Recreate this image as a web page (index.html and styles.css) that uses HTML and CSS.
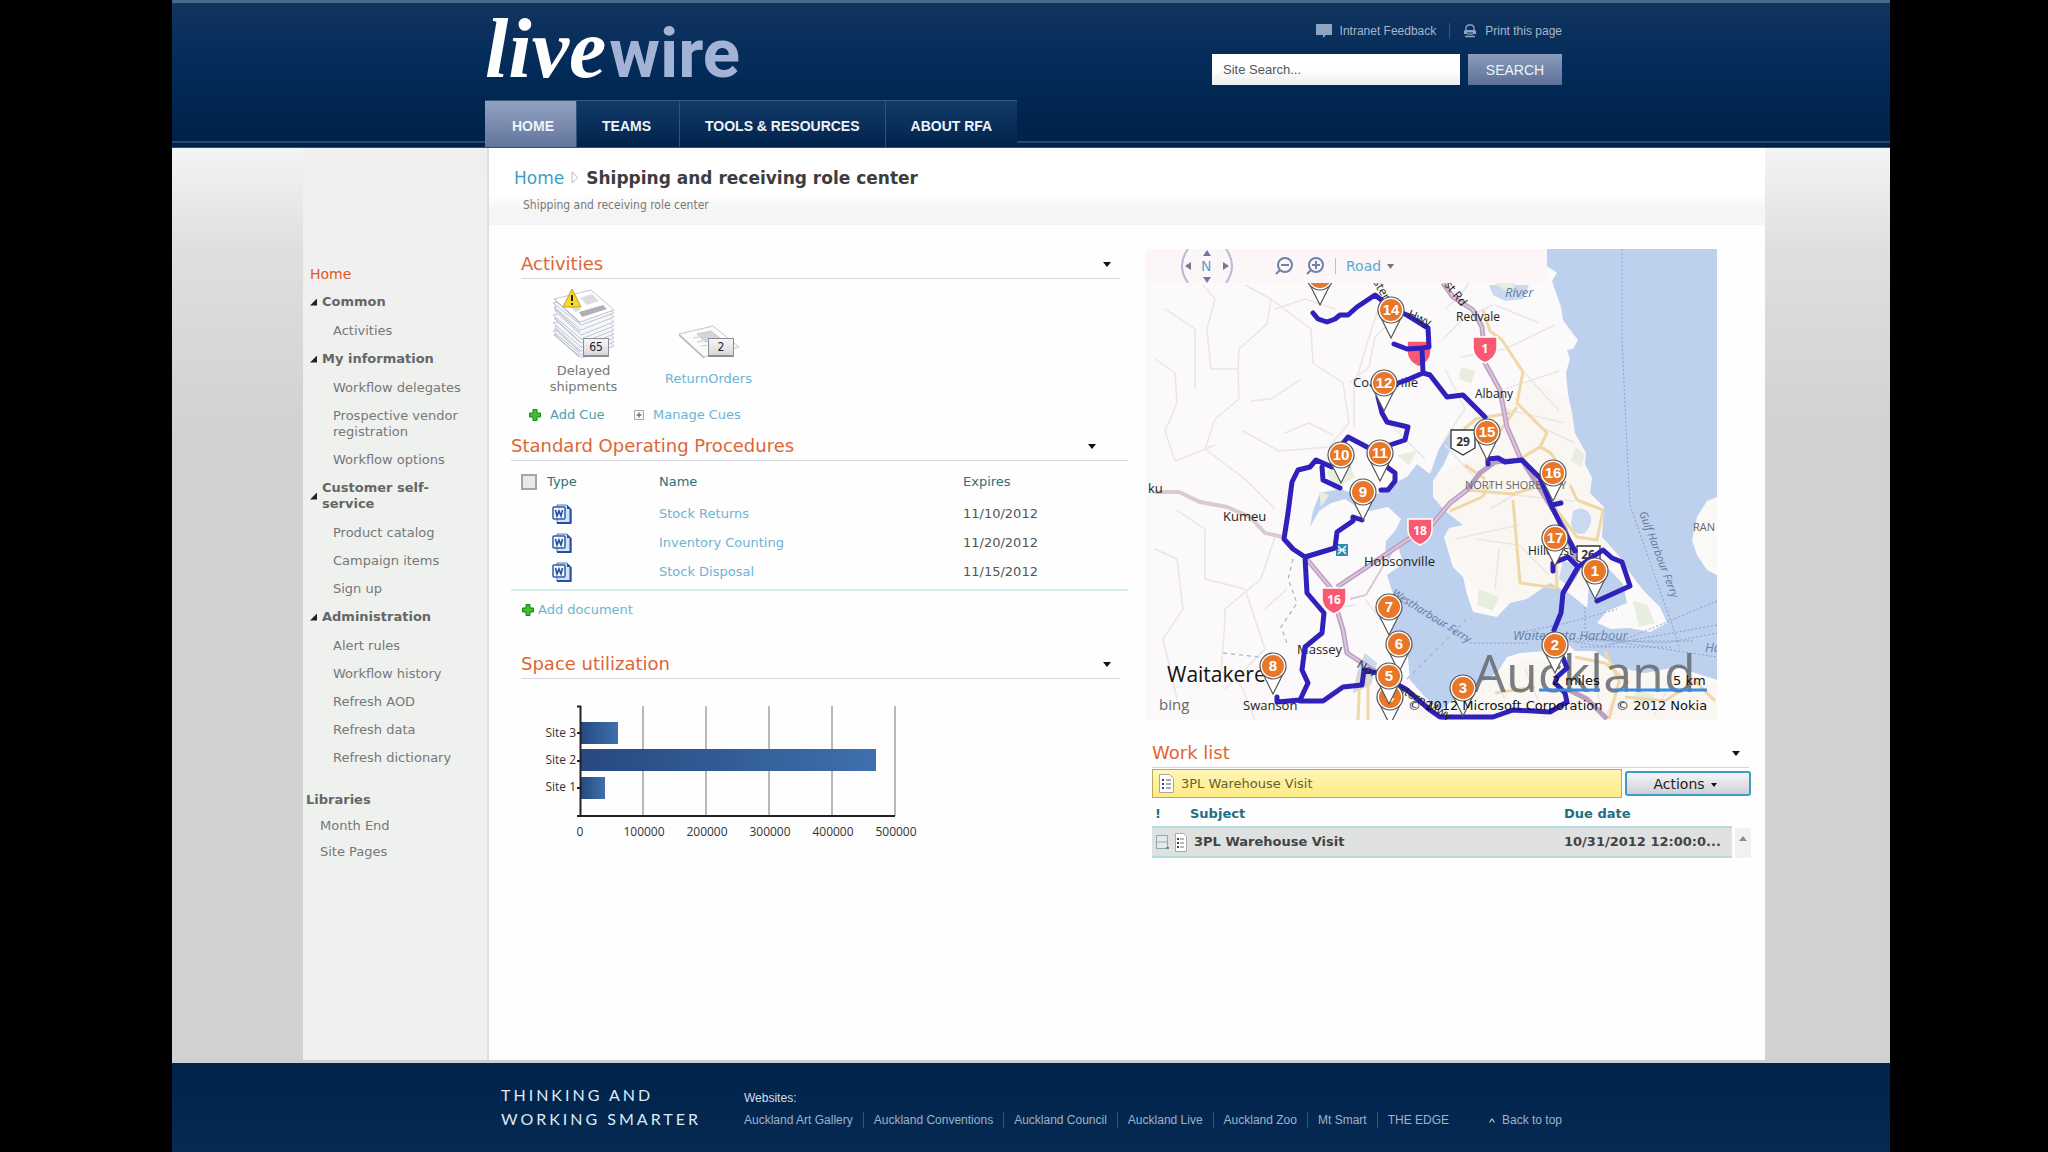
FILE: index.html
```html
<!DOCTYPE html>
<html lang="en">
<head>
<meta charset="utf-8">
<title>Shipping and receiving role center</title>
<link rel="stylesheet" href="styles.css">
</head>
<body>
<div class="page" id="top">
  <header class="header">
    <div class="header-row">
      <a class="logo" href="#"><span class="logo-live">live</span><span class="logo-wire">wire</span></a>
      <div class="tools">
        <div class="tool-links">
          <a class="tool-link" href="#"><svg width="16" height="14" viewBox="0 0 16 14"><path d="M0 0h16v11H10l-3 3v-3H0z" fill="#8fa4c0"/></svg>Intranet Feedback</a>
          <a class="tool-link" href="#"><svg width="14" height="14" viewBox="0 0 14 14"><path d="M3 6V3l2-2h4l2 2v3" fill="none" stroke="#8fa4c0" stroke-width="1.300"/><path d="M2 6h10l1 1v3H1V7z" fill="#8fa4c0"/><path d="M2 12.500h10M4 10h6" stroke="#8fa4c0" stroke-width="1.500"/><path d="M4 9h6" stroke="#0a2f5d"/></svg>Print this page</a>
        </div>
        <form class="search">
          <input class="search-box" type="text" aria-label="Site search" placeholder="Site Search...">
          <button class="search-button" type="button">SEARCH</button>
        </form>
      </div>
    </div>
    <nav class="tabs">
      <a class="tab tab-active" href="#">HOME</a>
      <a class="tab" href="#">TEAMS</a>
      <a class="tab" href="#">TOOLS &amp; RESOURCES</a>
      <a class="tab" href="#">ABOUT RFA</a>
    </nav>
  </header>

  <div class="body">
    <aside class="sidebar">
      <a class="side-home" href="#">Home</a>
      <h3 class="side-head"><span class="tri"></span>Common</h3>
      <a class="side-link" href="#">Activities</a>
      <h3 class="side-head"><span class="tri"></span>My information</h3>
      <a class="side-link" href="#">Workflow delegates</a>
      <a class="side-link" href="#">Prospective vendor registration</a>
      <a class="side-link" href="#">Workflow options</a>
      <h3 class="side-head"><span class="tri"></span><span class="side-name">Customer self-service</span></h3>
      <a class="side-link" href="#">Product catalog</a>
      <a class="side-link" href="#">Campaign items</a>
      <a class="side-link" href="#">Sign up</a>
      <h3 class="side-head"><span class="tri"></span>Administration</h3>
      <a class="side-link" href="#">Alert rules</a>
      <a class="side-link" href="#">Workflow history</a>
      <a class="side-link" href="#">Refresh AOD</a>
      <a class="side-link" href="#">Refresh data</a>
      <a class="side-link" href="#">Refresh dictionary</a>
      <h3 class="lib-head">Libraries</h3>
      <a class="lib-link" href="#">Month End</a>
      <a class="lib-link" href="#">Site Pages</a>
    </aside>

    <main class="main">
      <div class="title-band">
        <div class="crumbs"><a class="crumb-link" href="#">Home</a><svg width="8" height="14" viewBox="0 0 8 14"><path d="M1 1v11l6-5.500z" fill="#fff" stroke="#b9b9b9"/></svg><h1 class="title">Shipping and receiving role center</h1></div>
        <p class="subtitle">Shipping and receiving role center</p>
      </div>
      <div class="columns">
        <div class="col-left">
          <section class="inset">
            <div class="head"><h2>Activities</h2><button class="menu" type="button" aria-label="Activities menu"></button></div>
            <div class="cues">
              <a class="cue cue-late" href="#">
                <svg class="cue-icon" width="64" height="70" viewBox="0 0 64 70">
                  <g fill="#f6f7fa" stroke="#c3c6d0" stroke-width="1">
                    <path d="M2 47l38-9 22 20-32 12z"/><path d="M1 43l38-9 23 20-33 13z"/><path d="M3 39l38-9 21 20-33 13z"/><path d="M1 35l38-9 23 20-33 13z"/><path d="M3 31l38-9 21 20-33 13z"/><path d="M1 27l38-9 23 20-33 13z"/><path d="M3 23l38-9 21 20-33 13z"/><path d="M2 19l38-9 22 19-33 13z"/><path d="M1 15l38-9 23 19-33 12z"/>
                    <path d="M2 11l37-9 23 20-34 12z" fill="#fff"/>
                  </g>
                  <path d="M2 11l26 24M2 20l26 24M2 30l26 24M2 40l26 24M2 46l25 23" stroke="#a9b2d0" fill="none"/>
                  <path d="M28 10l12-4 7 7-12 4zM18 18l6-2 5 6-6 2z" fill="#dcdde1"/>
                  <path d="M27 24l24-7 4 4-25 8z" fill="#aeb0b5"/>
                  <path d="M20 1l9 18H11z" fill="#f7d92b" stroke="#c59f12"/><path d="M20 7v6M20 15v2" stroke="#222" stroke-width="2"/>
                </svg>
                <span class="badge">65</span>
                <span class="cue-text">Delayed shipments</span>
              </a>
              <a class="cue" href="#">
                <svg class="cue-icon" width="64" height="70" viewBox="0 0 64 70">
                  <path d="M2 46l34-8 26 21-35 10z" fill="#fbfbfb" stroke="#c6c7cb"/><path d="M2 46v2l24 22h2z" fill="#b8bac0"/>
                  <path d="M20 46l14-3 9 7-15 4zM16 50l6-1M20 54l6-1M24 58l6-1" fill="#d5d6da" stroke="#c9cace"/>
                </svg>
                <span class="badge">2</span>
                <span class="cue-text">ReturnOrders</span>
              </a>
            </div>
            <div class="cue-links">
              <a class="add-cue" href="#"><svg width="12" height="12" viewBox="0 0 12 12"><path d="M4 .5h4V4h3.500v4H8v3.500H4V8H.5V4H4z" fill="#3fc02f" stroke="#17851a"/></svg>Add Cue</a>
              <a class="manage-cues" href="#"><svg width="10" height="10" viewBox="0 0 10 10"><path d="M.5.5h9v9h-9z" fill="#fafafa" stroke="#aaa"/><path d="M2.500 5h5M5 2.500v5" stroke="#777" stroke-width="1.500"/></svg>Manage Cues</a>
            </div>
          </section>

          <section class="procedures">
            <div class="head head-wide"><h2>Standard Operating Procedures</h2><button class="menu" type="button" aria-label="Procedures menu"></button></div>
            <table class="docs">
              <thead><tr><th class="c-check"><input type="checkbox" aria-label="Select all"></th><th class="c-type">Type</th><th class="c-name">Name</th><th>Expires</th></tr></thead>
              <tbody>
                <tr><td></td><td class="c-icon"><svg class="word" width="20" height="20" viewBox="0 0 20 20"><path d="M5 1h10l4 4v14H5z" fill="#d5e3f8" stroke="#5b7fbf"/><path d="M15 1v4h4z" fill="#27509c"/><path d="M18.500 5v14H5" fill="none" stroke="#27509c" stroke-width="2"/><rect x="1" y="3" width="12" height="12" rx="1" fill="#f2f6fd" stroke="#2d5cab" stroke-width="1.500"/><path d="M3.500 6l1.500 6 2-5 2 5 1.500-6" fill="none" stroke="#27509c" stroke-width="1.600"/></svg></td><td><a href="#">Stock Returns</a></td><td>11/10/2012</td></tr>
                <tr><td></td><td class="c-icon"><svg class="word" width="20" height="20" viewBox="0 0 20 20"><path d="M5 1h10l4 4v14H5z" fill="#d5e3f8" stroke="#5b7fbf"/><path d="M15 1v4h4z" fill="#27509c"/><path d="M18.500 5v14H5" fill="none" stroke="#27509c" stroke-width="2"/><rect x="1" y="3" width="12" height="12" rx="1" fill="#f2f6fd" stroke="#2d5cab" stroke-width="1.500"/><path d="M3.500 6l1.500 6 2-5 2 5 1.500-6" fill="none" stroke="#27509c" stroke-width="1.600"/></svg></td><td><a href="#">Inventory Counting</a></td><td>11/20/2012</td></tr>
                <tr><td></td><td class="c-icon"><svg class="word" width="20" height="20" viewBox="0 0 20 20"><path d="M5 1h10l4 4v14H5z" fill="#d5e3f8" stroke="#5b7fbf"/><path d="M15 1v4h4z" fill="#27509c"/><path d="M18.500 5v14H5" fill="none" stroke="#27509c" stroke-width="2"/><rect x="1" y="3" width="12" height="12" rx="1" fill="#f2f6fd" stroke="#2d5cab" stroke-width="1.500"/><path d="M3.500 6l1.500 6 2-5 2 5 1.500-6" fill="none" stroke="#27509c" stroke-width="1.600"/></svg></td><td><a href="#">Stock Disposal</a></td><td>11/15/2012</td></tr>
              </tbody>
            </table>
            <a class="add-doc" href="#"><svg width="12" height="12" viewBox="0 0 12 12"><path d="M4 .5h4V4h3.500v4H8v3.500H4V8H.5V4H4z" fill="#3fc02f" stroke="#17851a"/></svg>Add document</a>
          </section>

          <section class="inset space">
            <div class="head"><h2>Space utilization</h2><button class="menu" type="button" aria-label="Space utilization menu"></button></div>
            <svg class="chart" width="410" height="140" viewBox="1 0 410 140">
              <defs><linearGradient id="bar"><stop offset="0" stop-color="#26497f"/><stop offset="1" stop-color="#3f70ae"/></linearGradient></defs>
              <path d="M123 6v110M186 6v110M249 6v110M312 6v110M375 6v110" stroke="#a3a3a8" stroke-width="1.500"/>
              <rect x="61" y="22" width="37" height="22" fill="url(#bar)"/>
              <rect x="61" y="49" width="295" height="22" fill="url(#bar)"/>
              <rect x="61" y="77" width="24" height="22" fill="url(#bar)"/>
              <path d="M57 6.500h3.500V116M57 116h318M57 33h4M57 61h4M57 88h4" fill="none" stroke="#222" stroke-width="2"/>
              <g class="chart-y"><text x="56" y="37">Site 3</text><text x="56" y="64">Site 2</text><text x="56" y="91">Site 1</text></g>
              <g class="chart-x"><text x="60" y="136">0</text><text x="124" y="136">100000</text><text x="187" y="136">200000</text><text x="250" y="136">300000</text><text x="313" y="136">400000</text><text x="376" y="136">500000</text></g>
            </svg>
          </section>
        </div>

        <div class="col-right">
          <div class="map">
            <svg class="map-art" viewBox="0 0 572 471">
              <defs>
                <g id="pin"><path d="M-10 8L0 28 10 8" fill="#fff" stroke="#555" stroke-width="1.200"/><circle r="13" fill="#fff" stroke="#555" stroke-width="1.200"/><circle r="11" fill="#e9772a"/></g>
                <path id="shield" d="M-12-12H12V0Q11 9 0 14Q-11 9-12 0z" fill="#fa5a71" stroke="#fff" stroke-width="1.500"/>
                <clipPath id="frame"><path d="M0 34H572V471H0z"/></clipPath>
              </defs>
              <rect width="572" height="471" fill="#fbf9f9"/>
              <path d="M284 230l40-20 60-80 40 20 20 60 14 50 0 30 20 20-40 30-60 20-40-10-30-40zM262 470l60-30 60-30 80 5 110 20v36z" fill="#faf7f3"/>
              <path d="M402 0V17L412 24 407 32 410 41 416 58 418 71 426 82 433 91 428 100 422 101 425 110 421 124 423 145 427 164 430 184 441 204 440 215 447 229 445 244 459 258 457 288 475 308 485 324 498 341 515 358 522 374 505 383 485 379 466 380 452 374 462 362 482 354 478 335 462 318 445 325 442 359 425 345 405 334 382 350 365 354 352 368 328 363 322 345 318 328 308 318 302 298 299 288 304 279 318 276 300 262 288 248 288 232 299 215 310 190 304 184 294 200 285 225 272 215 262 228 245 236 225 250 195 240 175 244 168 262 165 278 174 262 186 254 200 250 215 260 225 262 243 258 256 270 250 282 241 292 240 306 244 311 252 294 260 320 280 330 292 318 290 308 262 312 242 326 248 345 240 378 262 398 265 431 280 448 295 461 318 444 352 424 362 408 375 404 400 402 418 390 430 402 450 402 472 418 500 424 532 418 572 431V0z" fill="#bdd1ef"/>
              <path d="M572 248L562 252 552 268 547 291 552 306 562 321 572 326zM482 372q10 -4 14 4l-8 4z" fill="#fbf9f6"/>
              <path d="M428 262q10-6 16 2t-4 20q-12 4-14-10zM418 312l10 2 4 14-10 8-8-6zM344 36h40l-6 14-18 2-12-6zM220 404l12 10-6 22-18 8 4-20z" fill="#c8d9f0"/>
              <g fill="#e8eedd"><path d="M316 118l14 4-4 12-12-4zM252 206l20-4-8 14zM488 352l14 4 8 18-16 4zM182 222l20-14 8 20-22 14zM334 340l20 8-6 14-16-6zM174 242l10 4-8 12zM430 198l10 8-4 12-10-6zM490 440l20 6-6 12-16-4zM350 34h20l-4 12z"/></g>
              <g fill="none" stroke="#e9e5e8" stroke-width="1.500" stroke-linejoin="round">
                <path d="M58 36L70 50 62 80 66 120 93 120 94 100 122 75 126 50 100 36M93 120L94 150 70 170 60 200 100 230 130 260M10 110l20 14 2 30-12 28 10 30 40-16M126 50l40 30 2 34 30 20 6 40-20 24-50 4-36-20M204 134l20-16 6-30 20-20M156 130l-30 20-20 2M30 260l30 20 0 50 40 10 20 60-40 40M10 300l22 10 6 50-20 30 14 60M130 60l30-10 30 10M130 288l-14 42-36 30 0 12-4 50 20 14 14 36M20 60l30 20 0 60M140 184l24-10 24 12"/>
                <path d="M209 178l0-40 12-40 16-50M298 90l20-20 30-14M350 56l44 18M316 108l44-8 50-24M360 140l54-18M360 160l60 14M380 124l34 38M300 120l20 40-20 30M300 60l14-12 10-14M400 180l30 14M300 196l40 44M345 260l24-14 60 6M330 290l44 6 30 30M310 290l64-14M350 340l4-40M450 420l6 48M480 424l-20 46M380 420l20 48M350 430l10 20M530 424l-20 42M178 360l34-4M220 350l20 26M240 170l40 40M120 360l22-20"/>
              </g>
              <g fill="none" stroke="#efd7a8" stroke-width="3" stroke-linejoin="round">
                <path d="M338 61L345 82 357 91 378 123 372 154 402 184 395 198 375 210M355 182l17-24M319 180l12-10 34-6M320 216l20 14M395 198q20 8 16 26M368 251l7 83 37 5-2-60M322 241l46 4 20-6M305 262l32-14 10-14M432 251l26 10-6 30-20-3-24-32M425 236l7 15M213 471l2-46M223 471l0-44M430 408l30 6 24 20M460 402l14 30-10 38M480 448l40 4 30-20 20 20M350 444l40-6"/>
              </g>
              <g fill="none" stroke="#bb9ec0" stroke-width="5" stroke-linejoin="round">
                <path d="M298 34L308 48 328 61 337 78 340 114 355 141 362 178 375 208 420 280 433 320 418 344M422 440l20 10 20 20M375 211L350 213 335 224 322 241 305 254 285 278 262 291 222 318 192 338M160 308L185 338 198 381 202 404 228 421 262 441"/>
              </g>
              <g fill="none" stroke="#dcc6dc" stroke-width="2"><path d="M298 34L308 48 328 61 337 78 340 114 355 141 362 178 375 208M322 241L305 254 285 278 262 291 222 318 192 338M160 308L185 338 198 381 202 404 228 421M205 350l16-4 20-34"/></g>
              <path d="M10 243H34L55 253 82 258 105 268 120 284 138 288" fill="none" stroke="#dccad3" stroke-width="4"/>
              <g fill="none" stroke="#aab0c0" stroke-width="1.200" stroke-dasharray="4 4">
                <path d="M148 310L143 330 152 354 136 378 142 394M78 404l36 4M262 430l60-60 6 0"/>
              </g>
              <path d="M477 0l0 90 6 130 2 36 42 120 8 24M285 368l40 26 60 0M440 358v30l132 20M572 352l-110 46-90 -14 50-10 50-14M400 388l120 6 52-10M572 376l-112 20M430 392h120M436 398h90" fill="none" stroke="#8d9fc8" stroke-width="1" stroke-dasharray="2 2"/>
              <text class="lake" x="360" y="48">River</text>
              <g class="ferry"><text transform="translate(494 264) rotate(69)">Gulf Harbour Ferry</text><text transform="translate(246 346) rotate(32)">Westharbour Ferry</text></g>
              <text class="harbour" x="368" y="391">Waitemata Harbour</text><text class="harbour" x="560" y="403">Ha</text>
              <text class="island" x="548" y="282">RAN</text><text class="shore" x="320" y="240">NORTH SHORE CITY</text>
              <use href="#shield" x="274" y="104"/>
              <g class="place"><text class="small" x="311" y="72">Redvale</text><text class="small" x="330" y="149">Albany</text><text x="208" y="138">Coatesville</text><text x="3" y="244">ku</text><text x="78" y="272">Kumeu</text><text x="219" y="317">Hobsonville</text><text x="152" y="405">Massey</text><text class="small" x="383" y="306">Hillcrest</text></g>
              <text class="big" x="22" y="433">Waitakere</text>
              <text class="city" x="328" y="443">Auckland</text>
              <g stroke="#333" fill="#fff" stroke-width="1.300"><path d="M306 181h24v18l-12 7-12-7zM432 297h23v14l-11 8-12-8z"/></g>
              <text class="route" x="318" y="197">29</text><text class="route" x="443" y="310">26</text>
              <rect x="191" y="295" width="12" height="12" fill="#2f8bb5"/><path d="M193 297l8 8m0-8l-8 8M193 301h8" stroke="#e8f4fa" stroke-width="1.500"/>
              <g fill="none" stroke="#2f21b9" stroke-width="5" stroke-linejoin="round" stroke-linecap="round">
                <path d="M168 64L173 70 182 73 190 70 195 66 203 66 212 58 230 46 248 60 262 66 283 79 284 98 277 99 262 100 249 95M277 99L278 124 262 131 253 134M233 148L237 164 242 173 263 178 260 191 242 197M222 198L203 188 198 194M187 218L171 211 165 218 153 221 147 233 143 264 139 290 148 300 160 308 162 344 179 364 177 384 160 398 157 421 163 434 155 451 132 453V448M155 452L178 452 198 438 217 436 219 421 232 424 262 441 285 461 295 468 348 468 368 461 405 463 422 453 420 444 410 434 412 428 422 419 418 409M160 308L190 299 192 283 208 272 208 268 217 271M177 218L178 231 195 239M242 218L250 224 250 232 243 241H236M278 124L285 126 302 148 318 146 340 168M343 215V210L353 209 360 213 377 211 395 229 407 258 417 278 430 302M407 256L416 254M408 322V314L423 308 433 318 418 344 416 364 409 381M433 318L458 301 467 309 477 313 485 337 452 352"/>
              </g>
              <g class="place"><text x="98" y="461">Swanson</text></g>
              <g class="road"><text transform="translate(299 36) rotate(52)">st Rd</text><text transform="translate(228 33) rotate(60)">ster</text><text transform="translate(262 68) rotate(24)">Hwy</text><text transform="translate(211 418) rotate(30)">Northwestern Mwy</text></g>
              <g class="shield-text"><use href="#shield" x="340" y="100"/><text x="340" y="104">1</text><use href="#shield" x="275" y="282"/><text x="275" y="286">18</text><use href="#shield" x="189" y="351"/><text x="189" y="355">16</text></g>
              <g clip-path="url(#frame)"><use href="#pin" x="175" y="28"/></g>
              <g class="pin-text">
                <use href="#pin" x="246" y="61"/><text x="246" y="66">14</text>
                <use href="#pin" x="239" y="134"/><text x="239" y="139">12</text>
                <use href="#pin" x="196" y="206"/><text x="196" y="211">10</text>
                <use href="#pin" x="235" y="204"/><text x="235" y="209">11</text>
                <use href="#pin" x="218" y="243"/><text x="218" y="248">9</text>
                <use href="#pin" x="342" y="183"/><text x="342" y="188">15</text>
                <use href="#pin" x="408" y="224"/><text x="408" y="229">16</text>
                <use href="#pin" x="410" y="289"/><text x="410" y="294">17</text>
                <use href="#pin" x="450" y="322"/><text x="450" y="327">1</text>
                <use href="#pin" x="410" y="396"/><text x="410" y="401">2</text>
                <use href="#pin" x="318" y="439"/><text x="318" y="444">3</text>
                <use href="#pin" x="244" y="358"/><text x="244" y="363">7</text>
                <use href="#pin" x="254" y="395"/><text x="254" y="400">6</text>
                <use href="#pin" x="245" y="448"/><text x="245" y="453">4</text>
                <use href="#pin" x="244" y="427"/><text x="244" y="432">5</text>
                <use href="#pin" x="128" y="417"/><text x="128" y="422">8</text>
              </g>
              <path d="M394 441h61M468 441h94" stroke="#3c8ae0" stroke-width="3"/>
              <g class="credit"><text x="407" y="436">2</text><text x="420" y="436">miles</text><text x="528" y="436">5 km</text><text x="263" y="461">© 2012 Microsoft Corporation</text><text x="471" y="461">© 2012 Nokia</text></g>
              <text class="bing" x="14" y="461">bing</text>
            </svg>
            <div class="map-bar">
              <svg width="52" height="34" viewBox="0 0 52 34"><path d="M7 0q-12 17 0 34M45 0q12 17 0 34" fill="none" stroke="#b9b9d4" stroke-width="2"/><path d="M22 7h8l-4-6zM22 28h8l-4 6zM10 13v8l-6-4zM42 13v8l6-4z" fill="#76769c"/></svg>
              <span class="north">N</span>
              <button class="zoom" type="button" aria-label="Zoom out"><svg width="18" height="18" viewBox="0 0 18 18"><circle cx="10" cy="8" r="7" fill="none" stroke="#7080ac" stroke-width="2"/><path d="M6 8h8M5 13l-4 4" stroke="#7080ac" stroke-width="2"/></svg></button>
              <button class="zoom" type="button" aria-label="Zoom in"><svg width="18" height="18" viewBox="0 0 18 18"><circle cx="10" cy="8" r="7" fill="none" stroke="#7080ac" stroke-width="2"/><path d="M6 8h8M10 4v8M5 13l-4 4" stroke="#7080ac" stroke-width="2"/></svg></button>
              <button class="road-button" type="button">Road<svg width="7" height="5" viewBox="0 0 7 5"><path d="M0 0h7L3.500 5z" fill="#777"/></svg></button>
            </div>
          </div>

          <section class="work">
            <div class="head head-work"><h2>Work list</h2><button class="menu" type="button" aria-label="Work list menu"></button></div>
            <div class="work-bar">
              <div class="notice"><svg width="15" height="19" viewBox="0 0 15 19"><path d="M.5.500h10l4 4v14H.5z" fill="#fff" stroke="#aaa5a0"/><path d="M3 6h2M3 10h2M3 14h2" stroke="#3f3fa8" stroke-width="2"/><path d="M7 6h5M7 10h5M7 14h5" stroke="#555"/></svg>3PL Warehouse Visit</div>
              <button class="actions" type="button">Actions<svg width="6" height="5" viewBox="0 0 6 5"><path d="M0 0h6L3 4z" fill="#111"/></svg></button>
            </div>
            <div class="work-list">
              <table class="tasks">
                <thead><tr><th class="t-flag">!</th><th>Subject</th><th class="t-due">Due date</th></tr></thead>
                <tbody><tr><td class="t-flag"><svg width="31" height="19" viewBox="0 0 31 19"><path d="M.5 2.500h11v13H.5zM1 9h11" fill="#e3e9ec" stroke="#93a7ae"/><path d="M10 14h3v2h-3z" fill="#4f9f62"/><path d="M19.500.500h8l3 3v15h-11z" fill="#fff" stroke="#aaa"/><path d="M21 6h2M21 10h2M21 14h2" stroke="#444" stroke-width="2"/><path d="M24 6h4M24 10h4M24 14h4" stroke="#777"/></svg></td><td class="t-subject">3PL Warehouse Visit</td><td class="t-due">10/31/2012 12:00:0...</td></tr></tbody>
              </table>
              <button class="scroll-up" type="button" aria-label="Scroll up"><svg width="8" height="5" viewBox="0 0 8 5"><path d="M0 5h8L4 0z" fill="#8b8b8b"/></svg></button>
            </div>
          </section>
        </div>
      </div>
    </main>
  </div>

  <footer class="footer">
    <p class="motto">THINKING AND<br>WORKING SMARTER</p>
    <div class="sites">
      <p class="sites-head">Websites:</p>
      <nav class="sites-links"><a href="#">Auckland Art Gallery</a><a href="#">Auckland Conventions</a><a href="#">Auckland Council</a><a href="#">Auckland Live</a><a href="#">Auckland Zoo</a><a href="#">Mt Smart</a><a href="#">THE EDGE</a></nav>
    </div>
    <a class="to-top" href="#top"><svg width="6" height="5" viewBox="0 0 6 5"><path d="M.5 4.500L3 1l2.500 3.500" fill="none" stroke="#b5c5da" stroke-width="1.200"/></svg>Back to top</a>
  </footer>
</div>
</body>
</html>
```
FILE: styles.css
```css
* { box-sizing: border-box; }
body { margin: 0; background: #000; color: #666; font: 13px/16px "DejaVu Sans", Verdana, sans-serif; }
h1, h2, h3, p { margin: 0; font-size: 13px; font-weight: normal; }
a { color: #6cb4d2; text-decoration: none; }
button, input { font: inherit; margin: 0; }
svg { flex: none; display: block; }

.page { display: flex; flex-direction: column; min-height: 100vh; margin: 0 158px 0 172px; }

/* Header */
.header { padding: 0 328px 0 313px; border-top: 3px solid #466a8e; border-bottom: 1px solid #2c5078; font-family: "Liberation Sans", Arial, sans-serif; background: linear-gradient(transparent 138px, #2a5475 138px, #1d4265 140px, #012148 140px, #012148), linear-gradient(#12345f, #032b59 45%, #00224a 90%); }
.header-row { display: flex; justify-content: space-between; height: 97px; }
.logo { display: flex; align-items: baseline; padding-top: 6px; }
.logo-live { color: #fff; font: italic bold 84px/80px "Liberation Serif", "Times New Roman", serif; }
.logo-wire { color: #a3b3d6; font: bold 69px/80px Roboto, sans-serif; padding-left: 3px; }
.tools { display: flex; flex-direction: column; align-items: flex-end; gap: 15px; padding-top: 20px; width: 350px; }
.tool-links { display: flex; }
.tool-link { display: flex; align-items: center; gap: 8px; color: #a5b7cf; font-size: 12px; }
.tool-link + .tool-link { margin-left: 13px; padding-left: 13px; border-left: 1px solid #34547c; }
.search { display: flex; gap: 8px; width: 100%; }
.search-box { flex: 1; min-width: 0; height: 31px; padding: 0 11px; border: 0; font-size: 13px; color: #555; background: linear-gradient(#fff 50%, #ececee); }
.search-box::placeholder { color: #555; opacity: 1; }
.search-button { width: 94px; height: 31px; padding: 0; border: 0; color: #eef2f8; font-size: 14px; background: linear-gradient(#8b9cbd, #5c7097); }
.tabs { display: flex; height: 47px; width: max-content; background: linear-gradient(#113a68, #01234b); border-top: 1px solid #35597f; }
.tab { display: flex; align-items: center; padding: 3px 25px 0; color: #eef3f9; font-weight: bold; font-size: 14px; border-left: 1px solid #2f5379; }
.tab-active { padding: 3px 22px 0 27px; border: 0; background: linear-gradient(#93a2c2, #62759c); }
.tab:nth-child(2) { padding-right: 28px; }

/* Body */
.body { flex: 1; display: flex; padding: 0 125px 0 131px; background: linear-gradient(#f3f4f5, #dfdfe1 100px, #d2d1d3 280px); border-bottom: 3px solid #c9d1d8; }
.sidebar { width: 186px; padding: 112px 16px 0 7px; background: linear-gradient(#efefef, #eff1ef 200px); border-right: 2px solid #dcdedc; }
.sidebar a { display: block; color: #777; padding: 6px 0; }
.sidebar .side-home { color: #dd5a26; font-size: 14px; }
.sidebar .side-link { padding-left: 23px; margin-right: -9px; }
.side-head { display: flex; align-items: center; gap: 5px; padding: 6px 0 7px; font-weight: bold; }
.side-name { width: 110px; }
.tri { flex: none; width: 7px; height: 7px; background: #222; clip-path: polygon(100% 0, 100% 100%, 0 100%); }
.sidebar .lib-head { margin: 14px 0 0 -4px; padding: 6px 0 5px; font-weight: bold; }
.sidebar .lib-link { padding: 5px 0 5px 10px; }
.main { flex: 1; min-width: 0; background: #fefefe; }
.title-band { height: 77px; padding: 18px 24px 0 25px; background: linear-gradient(#fff 45px, #f6f5f6 62px); }
.crumbs { display: flex; align-items: center; gap: 7px; height: 24px; font-size: 17px; }
.crumb-link { color: #3c9fcb; }
.title { color: #3d3d3d; font-weight: bold; font-size: 17px; line-height: 24px; }
.subtitle { padding: 8px 0 0 9px; color: #777; font: 12px/14px "DejaVu Sans Condensed", "DejaVu Sans", sans-serif; }
.columns { display: grid; grid-template-columns: 617fr 606fr; gap: 17px; padding: 24px 14px 24px 22px; }
.col-left { padding-top: 3px; }
.inset { margin: 0 8px 0 10px; }

.head { display: flex; justify-content: space-between; align-items: center; height: 27px; padding-bottom: 2px; border-bottom: 1px solid #d6d4dc; }
.head h2 { color: #dd6634; font-size: 18px; line-height: 24px; }
.menu { width: 24px; height: 20px; padding: 0; border: 0; background: #111; clip-path: polygon(7px 8px, 15px 8px, 11px 13px); }
.head-wide .menu { margin-right: 23px; }

.cues { display: flex; padding-top: 9px; }
.cue { position: relative; display: flex; flex-direction: column; align-items: center; width: 125px; text-align: center; }
.cue-icon { margin-bottom: 5px; }
.cue-text { display: flex; align-items: center; height: 32px; width: 84px; justify-content: center; }
.cue-late { color: #777; }
.badge { position: absolute; top: 50px; left: 62px; width: 26px; height: 19px; border: 1px solid #8d8d93; border-bottom-width: 2px; background: linear-gradient(#f6f6f7, #d8d8dc); color: #222; font: 12px/16px "DejaVu Sans Condensed", sans-serif; }
.cue-links { display: flex; padding: 12px 0 0 8px; }
.cue-links a { display: flex; align-items: center; gap: 9px; }
.cue-links .add-cue { width: 105px; color: #4d9fae; }

.procedures { margin-top: 11px; }
.docs { width: 100%; border-collapse: collapse; border-bottom: 2px solid #d3edf1; }
.docs th { height: 39px; padding: 3px 0 0; text-align: left; font-weight: normal; color: #2c7078; }
.docs td { height: 29px; padding: 0 0 1px; color: #555; }
.docs tr:last-child td { height: 32px; padding-bottom: 3px; }
.docs .c-check { width: 36px; padding-left: 10px; }
.docs .c-type { width: 112px; }
.docs .c-name { width: 304px; }
.docs .c-icon { padding-left: 5px; }
.docs input { appearance: none; display: block; width: 16px; height: 16px; border: 2px solid #a5a5a5; background: #e9e9e9; }
.add-doc { display: flex; align-items: center; gap: 4px; padding: 11px 0 0 11px; }
.space { margin-top: 34px; }
.chart { margin-top: 21px; font: 12px "Open Sans", sans-serif; fill: #333; }
.chart-y { text-anchor: end; }
.chart-x { text-anchor: middle; }

/* Map */
.map { position: relative; max-width: 572px; overflow: hidden; }
.map-art { width: 100%; height: auto; font-family: "Open Sans", "Noto Sans", sans-serif; }
.map-bar { position: absolute; left: 0; top: 0; display: flex; align-items: center; width: 402px; height: 34px; padding-left: 36px; background: #fdf6f8; }
.north { width: 26px; margin: 0 48px 0 -32px; color: #58a5c6; font-size: 14px; }
.zoom { padding: 0; margin-right: 13px; border: 0; background: none; }
.zoom + .zoom { margin-right: 11px; }
.road-button { display: flex; align-items: center; gap: 6px; padding: 0 0 0 10px; border: 0; border-left: 1px solid #c3bcc5; background: none; color: #5ca9c9; font-size: 14px; line-height: 16px; }
.place { font-size: 13px; fill: #222; }
.place .small { font-size: 12px; }
.road { font-size: 12px; fill: #222; }
.big { font-size: 21px; fill: #111; }
.city { font-size: 52px; fill: #63696f; fill-opacity: .85; }
.lake, .harbour { font-size: 13px; font-style: italic; fill: #5b7fa8; }
.harbour { fill: #6683aa; }
.ferry { font-size: 11px; font-style: italic; fill: #66789a; }
.island, .shore { font-size: 11px; fill: #666; }
.shield-text, .pin-text { text-anchor: middle; font-weight: bold; fill: #fff; font-size: 12px; }
.pin-text { font-size: 15px; font-family: "Liberation Sans", sans-serif; }
.route { text-anchor: middle; font-size: 12px; font-weight: bold; fill: #333; }
.credit { font: 13px "DejaVu Sans", sans-serif; fill: #111; }
.bing { font-size: 15px; fill: #666; }

/* Work list */
.work { margin: 21px 0 0 7px; }
.head-work { margin-right: 2px; }
.work-bar { display: flex; align-items: center; gap: 3px; margin-top: 1px; }
.notice { flex: 1; display: flex; align-items: center; gap: 7px; height: 29px; padding-left: 6px; border: 1px solid #b5ab5e; background: linear-gradient(#fff6b8, #fdeb83); color: #66622f; }
.actions { display: flex; align-items: center; justify-content: center; gap: 6px; width: 126px; height: 25px; padding: 0 6px 0 0; border: 2px solid #3b9dc2; border-radius: 3px; background: linear-gradient(#f6f5f7, #d0d0d8); color: #222; font-size: 14px; }
.actions svg { margin-top: 4px; }
.work-list { display: flex; align-items: flex-end; gap: 3px; }
.tasks { flex: 1; border-collapse: collapse; text-align: left; color: #444; font-weight: bold; }
.tasks th { height: 29px; padding: 3px 0 0; color: #1d7083; }
.tasks th:first-child { padding-left: 3px; }
.tasks td { height: 30px; padding: 0; background: #dfe1e1; border-top: 2px solid #b3dedd; border-bottom: 2px solid #b3dedd; }
.tasks .t-flag { width: 38px; }
.tasks td.t-flag { padding-left: 4px; }
.tasks .t-subject { padding-left: 4px; }
.tasks .t-due { width: 168px; white-space: nowrap; }
.scroll-up { width: 16px; height: 30px; padding: 0 4px 10px; border: 0; background: #f1f1f2; }

/* Footer */
.footer { display: flex; height: 89px; padding: 0 328px 0 329px; border-top: 2px solid #04263f; background: linear-gradient(#00224b, #062a52); color: #d3dfeb; font: 12px/22px "Liberation Sans", Arial, sans-serif; }
.motto { width: 243px; padding-top: 18px; color: #dcebf3; font: 16px/24px Lato, sans-serif; letter-spacing: 3px; }
.sites { padding-top: 22px; }
.sites-head { font-size: 12px; }
.sites-links { display: flex; align-items: center; height: 22px; }
.sites-links a { line-height: 16px; color: #9db3cc; }
.sites-links a + a { margin-left: 10px; padding-left: 10px; border-left: 1px solid #34547a; }
.to-top { display: flex; align-items: center; gap: 7px; height: 22px; margin: 44px 0 0 auto; color: #9db3cc; }
```
